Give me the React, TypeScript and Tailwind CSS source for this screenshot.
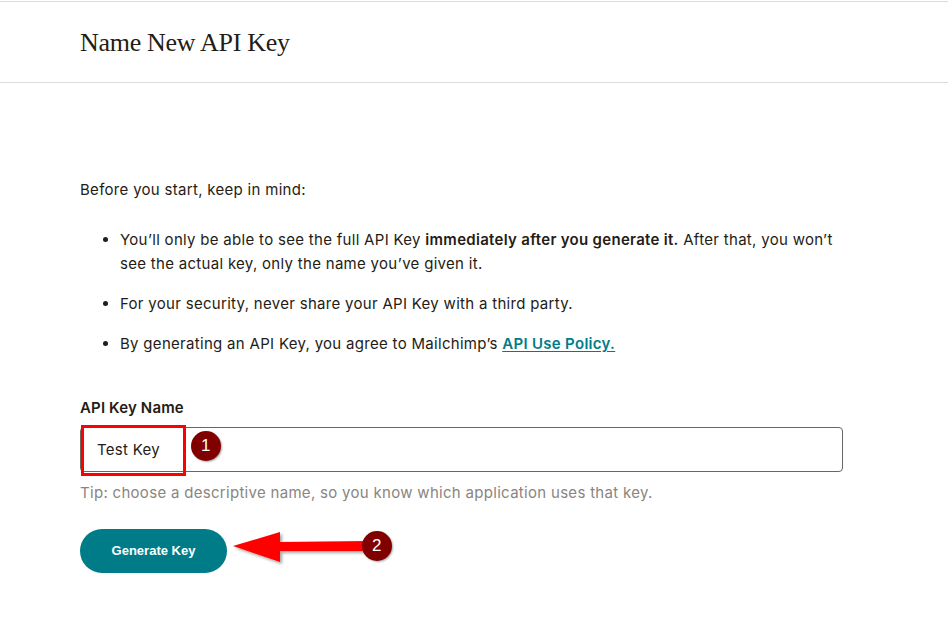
import React from 'react';

const sans = { fontFamily: 'Inter, "Liberation Sans", Arial, sans-serif' };

function Badge({ n }: { n: number }) {
    return (
        <div
            className="flex h-[30px] w-[30px] items-center justify-center rounded-full bg-[#800000] text-[17px] text-white shadow-[1px_1px_2px_rgba(0,0,0,0.35)]"
            style={{ fontFamily: '"Liberation Sans", Arial, sans-serif' }}
        >
            {n}
        </div>
    );
}

export default function App() {
    return (
        <div className="min-h-screen bg-white text-[#241c15]" style={sans}>
            <div className="pt-px">
                <header className="flex h-[82px] items-center border-y border-[#dcdcdc] px-20">
                    <h1
                        className="text-[26px] tracking-[-0.3px] text-[#241c15]"
                        style={{ fontFamily: '"Liberation Serif", "Times New Roman", serif' }}
                    >
                        Name New API Key
                    </h1>
                </header>
            </div>

            <main className="w-[845px] pl-20 pt-[95px] text-[15px] leading-6 tracking-[0.3px]">
                <p>Before you start, keep in mind:</p>
                <ul className="mt-[26px] list-disc space-y-4 pl-10">
                    <li>
                        You’ll only be able to see the full API Key{' '}
                        <strong className="font-semibold">immediately after you generate it.</strong> After that, you won’t
                        see the actual key, only the name you’ve given it.
                    </li>
                    <li>For your security, never share your API Key with a third party.</li>
                    <li>
                        By generating an API Key, you agree to Mailchimp’s{' '}
                        <a href="#" className="font-semibold text-[#007c89] underline underline-offset-2">
                            API Use Policy.
                        </a>
                    </li>
                </ul>

                <label htmlFor="keyname" className="mt-10 block font-semibold tracking-[0.15px]">
                    API Key Name
                </label>
                <div className="relative mt-[7px] w-[763px]">
                    <input
                        id="keyname"
                        defaultValue="Test Key"
                        className="block h-[45px] w-full rounded border border-[#6b6661] px-4 text-[15px] outline-none"
                    />
                    <div className="pointer-events-none absolute left-px top-[-2px] h-[51px] w-[105px] border-[3px] border-[#ff0000]" />
                    <div className="absolute left-[111px] top-[4px]">
                        <Badge n={1} />
                    </div>
                </div>
                <p className="mt-[9px] text-[#8a8580]">
                    Tip: choose a descriptive name, so you know which application uses that key.
                </p>

                <div className="relative mt-6">
                    <button
                        className="h-[44px] w-[147px] rounded-full bg-[#007c89] text-[13px] font-bold tracking-normal text-white"
                        style={{ fontFamily: '"Liberation Sans", Arial, sans-serif' }}
                    >
                        Generate Key
                    </button>
                    <svg
                        className="absolute left-[153px] top-[0px]"
                        width="140"
                        height="40"
                        viewBox="0 0 140 40"
                    >
                        <defs>
                            <filter id="sh" x="-10%" y="-20%" width="130%" height="160%">
                                <feDropShadow dx="2" dy="2" stdDeviation="1.5" floodColor="#000" floodOpacity="0.35" />
                            </filter>
                        </defs>
                        <path
                            d="M0 17 L47 3 L47 13 L135 12 L135 22 L47 22 L47 33 Z"
                            fill="#ff0000"
                            filter="url(#sh)"
                        />
                    </svg>
                    <div className="absolute left-[282px] top-[2px]">
                        <Badge n={2} />
                    </div>
                </div>
            </main>
        </div>
    );
}
